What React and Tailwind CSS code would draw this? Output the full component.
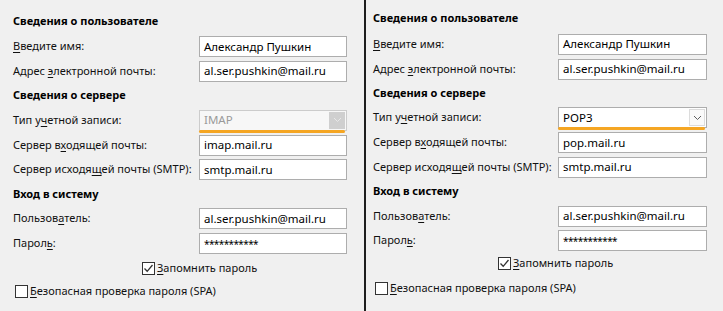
import React from "react";

function U({ children }) {
  return <span className="underline underline-offset-2">{children}</span>;
}

function Heading({ h, children }) {
  return <div className={`flex items-center font-bold text-[11px] text-black ${h}`}>{children}</div>;
}

function Row({ h, label, labelW, children }) {
  return (
    <div className={`flex items-center ${h}`}>
      <div className={`text-[11px] text-[#111111] shrink-0 ${labelW}`}>{label}</div>
      {children}
    </div>
  );
}

function TextBox({ w, value, small }) {
  return (
    <div className={`h-[21px] border border-[#adadad] bg-white flex items-center px-[4px] text-[11.5px] text-black ${w}`}>
      {small ? <span className="text-[10px] tracking-[-0.6px] pt-[2px]">{value}</span> : value}
    </div>
  );
}

function Chevron({ color }) {
  return (
    <svg width="9" height="6" viewBox="0 0 9 6">
      <path d="M1 1 L4.5 4.5 L8 1" fill="none" stroke={color} strokeWidth="1" />
    </svg>
  );
}

function Combo({ w, value, disabled }) {
  return (
    <div className={`relative ${w}`}>
      {disabled ? (
        <div className="h-[21px] border border-[#cccccc] bg-[#f7f7f7] flex items-center justify-between pl-[4px] pr-[1px] text-[11.5px] text-[#9a9a9a]">
          <span>{value}</span>
          <div className="w-[16px] h-[17px] bg-[#cfcfcf] flex items-center justify-center">
            <Chevron color="#e8e8e8" />
          </div>
        </div>
      ) : (
        <div className="h-[21px] border border-[#adadad] bg-white flex items-center justify-between pl-[4px] pr-[1px] text-[11.5px] text-black">
          <span>{value}</span>
          <div className="w-[16px] h-[17px] border border-[#dcdcdc] bg-[#fafafa] flex items-center justify-center">
            <Chevron color="#606060" />
          </div>
        </div>
      )}
      <div className="absolute left-0 right-[2px] bottom-[-2px] h-[3px] rounded-full bg-[#f5a623]" />
    </div>
  );
}

function CheckBox({ checked }) {
  return (
    <div className="w-[13px] h-[13px] border border-[#333333] bg-white flex items-center justify-center shrink-0">
      {checked && (
        <svg width="11" height="11" viewBox="0 0 11 11">
          <path d="M1.5 5.5 L4.2 8.3 L9.5 2" fill="none" stroke="#333333" strokeWidth="1.3" />
        </svg>
      )}
    </div>
  );
}

function Panel({ box, labelW, boxW, hs, combo, comboDisabled, incoming, checkPad }) {
  return (
    <div className={`flex flex-col shrink-0 ${box}`}>
      <Heading h={hs[0]}>Сведения о пользователе</Heading>
      <Row h={hs[1]} labelW={labelW} label={<><U>В</U>ведите имя:</>}>
        <TextBox w={boxW} value="Александр Пушкин" />
      </Row>
      <Row h={hs[2]} labelW={labelW} label={<>Адрес <U>э</U>лектронной почты:</>}>
        <TextBox w={boxW} value="al.ser.pushkin@mail.ru" />
      </Row>
      <Heading h={hs[3]}>Сведения о сервере</Heading>
      <Row h={hs[4]} labelW={labelW} label={<>Тип у<U>ч</U>етной записи:</>}>
        <Combo w={boxW} value={combo} disabled={comboDisabled} />
      </Row>
      <Row h={hs[5]} labelW={labelW} label={<>Сервер в<U>х</U>одящей почты:</>}>
        <TextBox w={boxW} value={incoming} />
      </Row>
      <Row h={hs[6]} labelW={labelW} label={<>Сервер исходя<U>щ</U>ей почты (SMTP):</>}>
        <TextBox w={boxW} value="smtp.mail.ru" />
      </Row>
      <Heading h={hs[7]}>Вход в систему</Heading>
      <Row h={hs[8]} labelW={labelW} label={<>Пользов<U>а</U>тель:</>}>
        <TextBox w={boxW} value="al.ser.pushkin@mail.ru" />
      </Row>
      <Row h={hs[9]} labelW={labelW} label={<>Парол<U>ь</U>:</>}>
        <TextBox w={boxW} value="***********" small />
      </Row>
      <div className={`flex items-center gap-[2px] text-[11px] text-[#111111] ${hs[10]} ${checkPad}`}>
        <CheckBox checked />
        <span>
          <U>З</U>апомнить пароль
        </span>
      </div>
      <div className={`flex items-center gap-[2px] text-[11px] text-[#111111] pl-[2px] ${hs[11]}`}>
        <CheckBox />
        <span>
          <U>Б</U>езопасная проверка пароля (SPA)
        </span>
      </div>
    </div>
  );
}

export default function App() {
  return (
    <div className="w-[723px] h-[311px] bg-[#f0f0f0] flex overflow-hidden font-['Noto_Sans','Open_Sans',sans-serif]">
      <Panel
        box="w-[364px] pl-[13px] pt-[8px]"
        labelW="w-[186px]"
        boxW="w-[148px]"
        hs={["h-[26px]", "h-[25px]", "h-[24px]", "h-[24px]", "h-[26px]", "h-[24px]", "h-[25px]", "h-[24px]", "h-[25px]", "h-[25px]", "h-[24px]", "h-[23px]"]}
        combo="IMAP"
        comboDisabled
        incoming="imap.mail.ru"
        checkPad="pl-[129px]"
      />
      <div className="w-[2px] h-full bg-[#1e1e1e] shrink-0" />
      <Panel
        box="w-[357px] pl-[7px] pt-[6px]"
        labelW="w-[185px]"
        boxW="w-[149px]"
        hs={["h-[25px]", "h-[26px]", "h-[24px]", "h-[24px]", "h-[25px]", "h-[25px]", "h-[24px]", "h-[24px]", "h-[26px]", "h-[23px]", "h-[23px]", "h-[27px]"]}
        combo="POP3"
        incoming="pop.mail.ru"
        checkPad="pl-[125px]"
      />
    </div>
  );
}
